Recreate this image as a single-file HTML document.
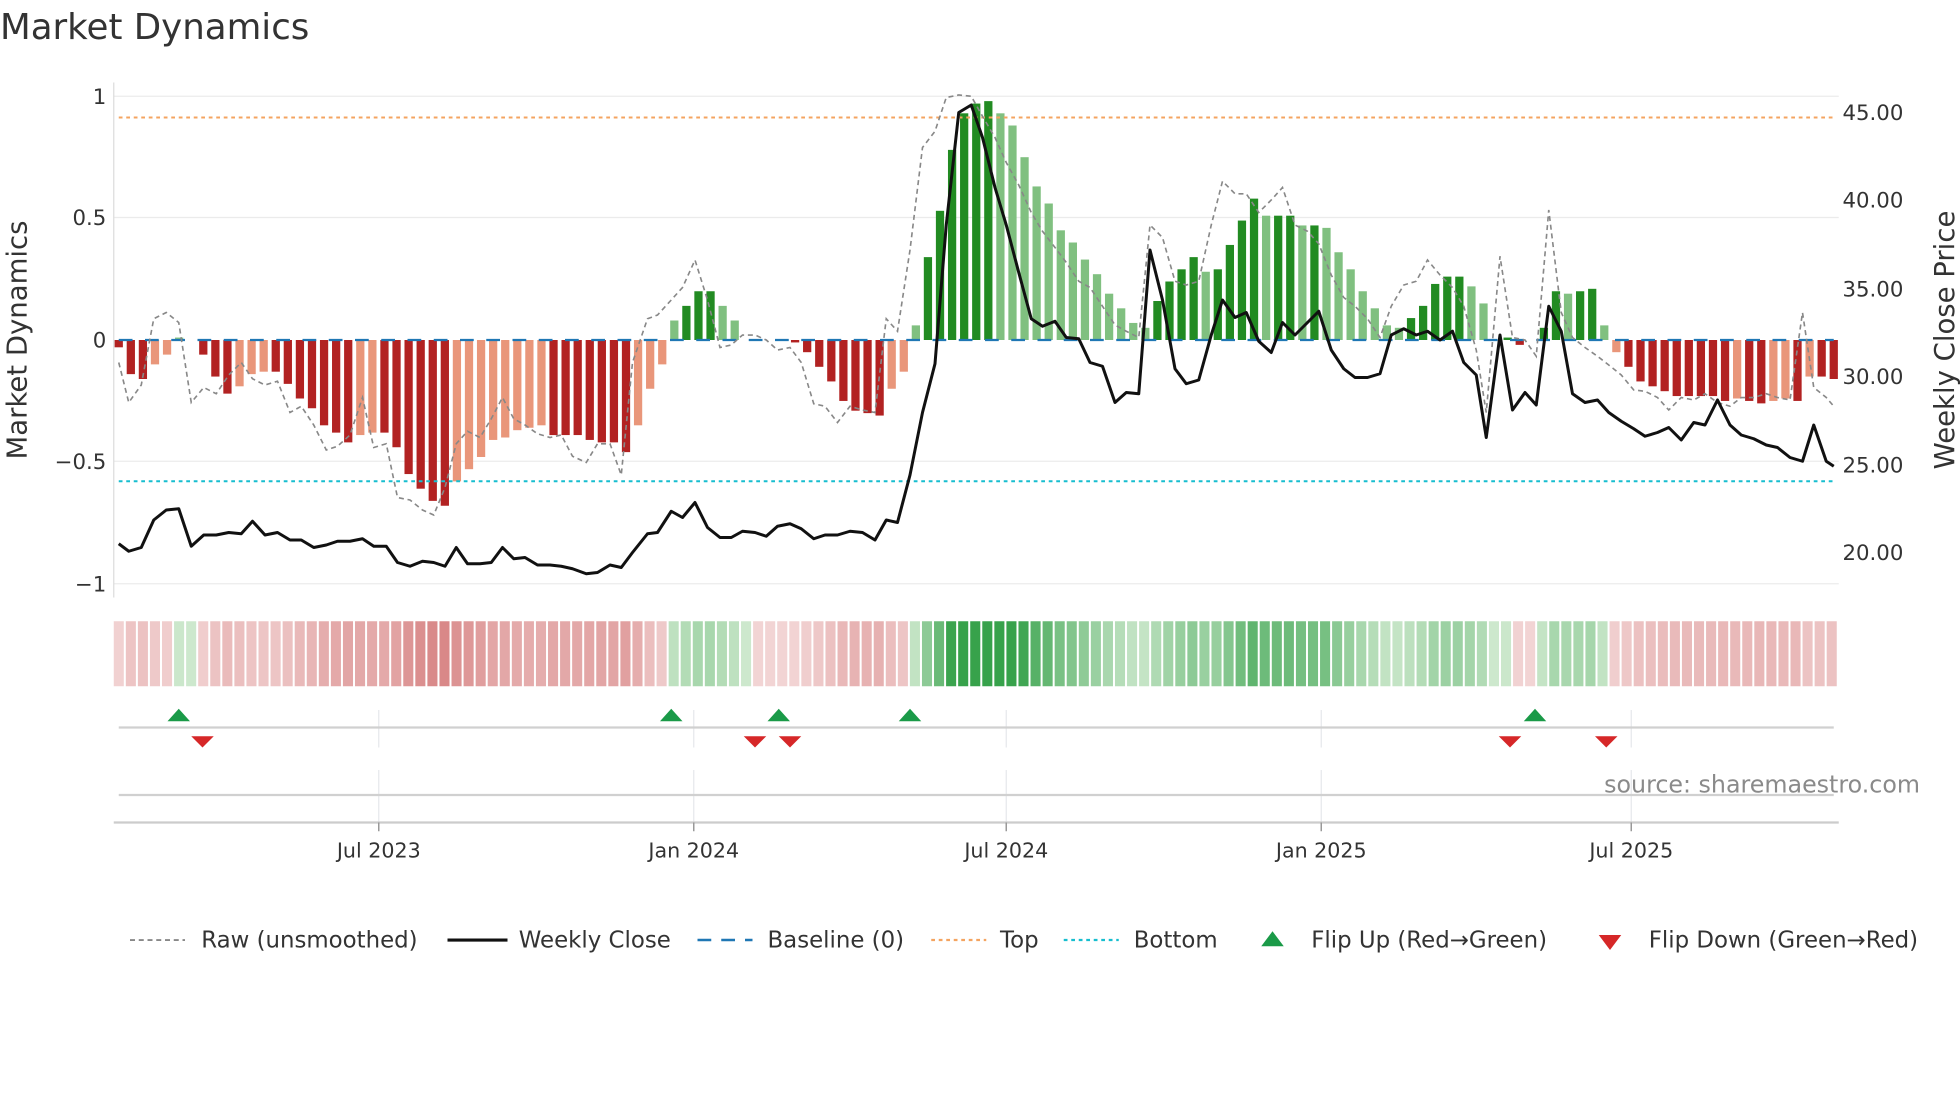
<!DOCTYPE html>
<html><head><meta charset="utf-8"><style>
html,body{margin:0;padding:0;background:#fff;}
svg{display:block;font-family:"DejaVu Sans","Liberation Sans",sans-serif;}
</style></head><body>
<svg id="s" width="1960" height="1102" viewBox="0 0 1568 881.6" xmlns="http://www.w3.org/2000/svg">
<rect width="1568" height="882" fill="#fff"/>
<text x="0" y="31" font-size="28.5" fill="#333">Market Dynamics</text>
<g stroke="#ebebeb" stroke-width="1">
<line x1="91" y1="77" x2="1471" y2="77"/><line x1="91" y1="174" x2="1471" y2="174"/>
<line x1="91" y1="369" x2="1471" y2="369"/><line x1="91" y1="467" x2="1471" y2="467"/>
</g>
<line x1="91" y1="66" x2="91" y2="478" stroke="#ddd" stroke-width="1"/>
<g font-size="17" fill="#333" text-anchor="end">
<text x="85" y="83">1</text><text x="85" y="180">0.5</text><text x="85" y="278">0</text>
<text x="85" y="375">−0.5</text><text x="85" y="473">−1</text>
</g>
<g font-size="17" fill="#333">
<text x="1474" y="96">45.00</text><text x="1474" y="166">40.00</text><text x="1474" y="237">35.00</text>
<text x="1474" y="307">30.00</text><text x="1474" y="378">25.00</text><text x="1474" y="448">20.00</text>
</g>
<text transform="translate(21,272) rotate(-90)" font-size="22" fill="#333" text-anchor="middle">Market Dynamics</text>
<text transform="translate(1563,272) rotate(-90)" font-size="22" fill="#333" text-anchor="middle">Weekly Close Price</text>
<g id="bars"></g>
<line x1="95" y1="94" x2="1467" y2="94" stroke="#f4a460" stroke-width="1.6" stroke-dasharray="3,3"/>
<line x1="95" y1="385" x2="1467" y2="385" stroke="#17becf" stroke-width="1.6" stroke-dasharray="3,3"/>
<line x1="95" y1="272" x2="1467" y2="272" stroke="#1f77b4" stroke-width="1.8" stroke-dasharray="11,10"/>
<polyline id="raw" fill="none" stroke="#888" stroke-width="1.3" stroke-dasharray="4,3" points="95,290 103,322 113,308 123,255 133,250 143,258 153,322 163,310 173,315 183,300 193,290 202,303 212,308 222,305 232,330 241,325 251,340 261,360 270,357 280,348 290,318 299,358 309,355 318,398 328,400 338,408 347,412 356,390 365,355 374,345 384,350 393,335 402,318 411,335 420,340 430,347 440,350 449,348 458,365 469,370 478,355 488,355 497,380 506,290 518,255 526,252 537,240 546,230 556,208 566,240 576,278 585,276 594,268 604,268 613,272 622,280 632,278 641,290 651,323 660,325 670,338 680,325 690,328 700,330 709,255 718,265 728,200 738,118 748,105 757,78 767,76 777,77 786,93 796,110 805,130 815,148 825,170 834,185 844,198 853,210 863,225 872,230 882,245 892,260 901,265 911,270 920,180 930,190 940,225 949,228 959,225 969,180 978,145 988,155 997,155 1007,170 1017,160 1026,150 1036,180 1046,185 1055,195 1065,220 1075,238 1084,245 1094,255 1104,270 1113,245 1123,228 1133,225 1142,208 1152,220 1162,230 1171,245 1181,280 1189,330 1200,205 1210,270 1220,272 1229,285 1239,168 1249,250 1258,270 1268,278 1278,285 1287,292 1297,300 1307,312 1316,313 1326,318 1335,328 1345,318 1355,320 1364,315 1374,322 1384,325 1393,318 1403,318 1413,315 1422,318 1432,320 1442,250 1451,310 1461,318 1467,325"/>
<polyline fill="none" stroke="#111" stroke-width="2.4" stroke-linejoin="round" points="95,435 103,441 113,438 123,416 133,408 143,407 153,437 163,428 173,428 183,426 193,427 202,417 212,428 222,426 232,432 241,432 251,438 261,436 270,433 280,433 290,431 299,437 309,437 318,450 328,453 338,449 347,450 356,453 365,438 374,451 384,451 393,450 402,438 411,447 420,446 430,452 440,452 449,453 458,455 469,459 478,458 488,452 497,454 506,442 518,427 526,426 537,409 546,414 556,402 566,422 576,430 585,430 594,425 604,426 613,429 622,421 632,419 641,423 651,431 660,428 670,428 680,425 690,426 700,432 709,416 718,418 728,380 738,330 748,291 757,180 767,90 777,84 786,110 796,150 805,180 815,218 825,255 834,261 844,257 853,270 863,271 872,290 882,293 892,322 901,314 911,315 920,200 930,240 940,295 949,307 959,304 969,268 978,240 988,254 997,250 1007,273 1017,282 1026,258 1036,268 1046,258 1055,249 1065,280 1075,295 1084,302 1094,302 1104,299 1113,268 1123,263 1133,268 1142,265 1152,272 1162,265 1171,290 1181,300 1189,350 1200,268 1210,328 1220,314 1229,324 1239,245 1249,265 1258,315 1268,322 1278,320 1287,330 1297,337 1307,343 1316,349 1326,346 1335,342 1345,352 1355,338 1364,340 1374,320 1384,340 1393,348 1403,351 1413,356 1422,358 1432,366 1442,369 1451,340 1461,369 1467,373"/>
<g id="heat"></g>
<g stroke="#e6e8ec" stroke-width="1">
<line x1="303" y1="568" x2="303" y2="598"/><line x1="555" y1="568" x2="555" y2="598"/><line x1="805" y1="568" x2="805" y2="598"/><line x1="1057" y1="568" x2="1057" y2="598"/><line x1="1305" y1="568" x2="1305" y2="598"/>
<line x1="303" y1="616" x2="303" y2="658"/><line x1="555" y1="616" x2="555" y2="658"/><line x1="805" y1="616" x2="805" y2="658"/><line x1="1057" y1="616" x2="1057" y2="658"/><line x1="1305" y1="616" x2="1305" y2="658"/>
</g>
<line x1="95" y1="582" x2="1467" y2="582" stroke="#d0d0d0" stroke-width="1.8"/>
<line x1="95" y1="636" x2="1467" y2="636" stroke="#d0d0d0" stroke-width="1.8"/>
<line x1="91" y1="658" x2="1471" y2="658" stroke="#ccc" stroke-width="1.8"/>
<g stroke="#999" stroke-width="1.2">
<line x1="303" y1="658" x2="303" y2="665"/><line x1="555" y1="658" x2="555" y2="665"/><line x1="805" y1="658" x2="805" y2="665"/><line x1="1057" y1="658" x2="1057" y2="665"/><line x1="1305" y1="658" x2="1305" y2="665"/>
</g>
<g fill="#1a9a48">
<path d="M134,577 L143,567 L152,577Z"/><path d="M528,577 L537,567 L546,577Z"/><path d="M614,577 L623,567 L632,577Z"/><path d="M719,577 L728,567 L737,577Z"/><path d="M1219,577 L1228,567 L1237,577Z"/>
</g>
<g fill="#d62728">
<path d="M153,589 L171,589 L162,598Z"/><path d="M595,589 L613,589 L604,598Z"/><path d="M623,589 L641,589 L632,598Z"/><path d="M1199,589 L1217,589 L1208,598Z"/><path d="M1276,589 L1294,589 L1285,598Z"/>
</g>
<text x="1536" y="634" font-size="19" fill="#8a8a8a" text-anchor="end">source: sharemaestro.com</text>
<g font-size="16.5" fill="#333" text-anchor="middle">
<text x="303" y="686">Jul 2023</text><text x="555" y="686">Jan 2024</text><text x="805" y="686">Jul 2024</text><text x="1057" y="686">Jan 2025</text><text x="1305" y="686">Jul 2025</text>
</g>
<g font-size="18.3" fill="#333">
<line x1="104" y1="752" x2="148" y2="752" stroke="#888" stroke-width="1.5" stroke-dasharray="4,3"/><text x="161" y="758">Raw (unsmoothed)</text>
<line x1="358" y1="752" x2="406" y2="752" stroke="#111" stroke-width="2.5"/><text x="415" y="758">Weekly Close</text>
<line x1="558" y1="752" x2="602" y2="752" stroke="#1f77b4" stroke-width="2" stroke-dasharray="11,8"/><text x="614" y="758">Baseline (0)</text>
<line x1="745" y1="752" x2="789" y2="752" stroke="#f4a460" stroke-width="1.8" stroke-dasharray="3,3"/><text x="800" y="758">Top</text>
<line x1="851" y1="752" x2="895" y2="752" stroke="#17becf" stroke-width="1.8" stroke-dasharray="3,3"/><text x="907" y="758">Bottom</text>
<path d="M1009,757 L1018,745 L1027,757Z" fill="#1a9a48"/><text x="1049" y="758">Flip Up (Red→Green)</text>
<path d="M1279,748 L1297,748 L1288,760Z" fill="#d62728"/><text x="1319" y="758">Flip Down (Green→Red)</text>
</g>
</svg>
<script>
var v=[-0.03,-0.14,-0.16,-0.10,-0.06,0.01,0,-0.06,-0.15,-0.22,-0.19,-0.14,-0.13,-0.13,-0.18,-0.24,-0.28,-0.35,-0.38,-0.42,-0.39,-0.38,-0.38,-0.44,-0.55,-0.61,-0.66,-0.68,-0.58,-0.53,-0.48,-0.41,-0.40,-0.37,-0.36,-0.35,-0.39,-0.39,-0.39,-0.41,-0.42,-0.42,-0.46,-0.35,-0.20,-0.10,0.08,0.14,0.20,0.20,0.14,0.08,0,0,0,0,-0.01,-0.05,-0.11,-0.17,-0.25,-0.29,-0.30,-0.31,-0.20,-0.13,0.06,0.34,0.53,0.78,0.93,0.97,0.98,0.93,0.88,0.75,0.63,0.56,0.45,0.40,0.33,0.27,0.19,0.13,0.07,0.05,0.16,0.24,0.29,0.34,0.28,0.29,0.39,0.49,0.58,0.51,0.51,0.51,0.47,0.47,0.46,0.36,0.29,0.20,0.13,0.06,0.05,0.09,0.14,0.23,0.26,0.26,0.22,0.15,0,0.01,-0.02,0,0.05,0.20,0.19,0.20,0.21,0.06,-0.05,-0.11,-0.17,-0.19,-0.21,-0.23,-0.23,-0.23,-0.23,-0.25,-0.24,-0.25,-0.26,-0.25,-0.24,-0.25,-0.15,-0.15,-0.16];
var ns="http://www.w3.org/2000/svg",B=document.getElementById('bars'),H=document.getElementById('heat');
var n=v.length,step=(1467-95)/(n-1),hw=(1471-91)/n;
function r(p,a){var e=document.createElementNS(ns,'rect');for(var k in a)e.setAttribute(k,a[k]);p.appendChild(e);}
for(var i=0;i<n;i++){var x=95+i*step,y=v[i],dark=i==0||Math.abs(y)>=Math.abs(v[i-1]);
var c=y>=0?(dark?'#228b22':'#80c080'):(dark?'#b22222':'#e9967a');
var h=Math.abs(y)*195;if(h>0.3)r(B,{x:x-3.3,y:y>=0?272-h:272,width:6.6,height:h,fill:c});
var t=Math.min(1,Math.abs(y)/0.8),col;
if(y>0||(y==0&&i>0&&v[i-1]>0)){col='rgb('+Math.round(205-150*t)+','+Math.round(232-70*t)+','+Math.round(205-130*t)+')';}
else{col='rgb('+Math.round(242-30*t)+','+Math.round(212-90*t)+','+Math.round(212-90*t)+')';}
r(H,{x:91+i*hw,y:497,width:hw-1.6,height:52,fill:col});}
</script>
</body></html>
